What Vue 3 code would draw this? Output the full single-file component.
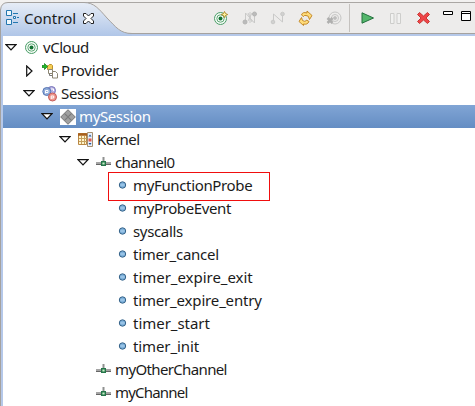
<script setup>
const rows = [
  { t: 'vCloud', level: 0, arrow: 'open', icon: 'target', ls: -0.45 },
  { t: 'Provider', level: 1, arrow: 'closed', icon: 'provider', ls: -0.15 },
  { t: 'Sessions', level: 1, arrow: 'open', icon: 'sessions', ls: -0.35 },
  { t: 'mySession', level: 2, arrow: 'open', icon: 'session', selected: true, ls: -0.38 },
  { t: 'Kernel', level: 3, arrow: 'open', icon: 'kernel', ls: -0.5 },
  { t: 'channel0', level: 4, arrow: 'open', icon: 'channel', ls: -0.6 },
  { t: 'myFunctionProbe', level: 5, icon: 'event', marked: true, ls: -0.35 },
  { t: 'myProbeEvent', level: 5, icon: 'event', ls: -0.38 },
  { t: 'syscalls', level: 5, icon: 'event', ls: -0.35 },
  { t: 'timer_cancel', level: 5, icon: 'event', ls: -0.27 },
  { t: 'timer_expire_exit', level: 5, icon: 'event', ls: -0.03 },
  { t: 'timer_expire_entry', level: 5, icon: 'event', ls: -0.17 },
  { t: 'timer_start', level: 5, icon: 'event', ls: -0.03 },
  { t: 'timer_init', level: 5, icon: 'event', ls: -0.1 },
  { t: 'myOtherChannel', level: 4, icon: 'channel', ls: -0.64 },
  { t: 'myChannel', level: 4, icon: 'channel', ls: -0.8 },
]
</script>

<template>
  <div class="view">
    <header class="bar">
      <svg class="tabshape" width="150" height="36" viewBox="0 0 150 36">
        <defs>
          <linearGradient id="tabfill" x1="0" y1="0" x2="0" y2="1">
            <stop offset="0" stop-color="#e7edf6" />
            <stop offset="1" stop-color="#b0c6e8" />
          </linearGradient>
        </defs>
        <path d="M0 0H9V3H5L1 8V12H0z" fill="#f2f1f0" />
        <path d="M.5 36V10Q1 2.500 8 2.500H84C94 2.500 99 9 107 18C116 27 120 33.500 132 33.500V36Z" fill="url(#tabfill)" />
        <path d="M.5 36V10Q1 2.500 8 2.500H84C94 2.500 99 9 107 18C116 27 120 33.500 132 33.500" fill="none" stroke="#a5a29f" />
      </svg>
      <div class="tab">
        <svg width="14" height="16" viewBox="0 0 14 16" fill="#eff8fc" stroke="#2377b0">
          <path d="M.5.5h5v5h-5zM.5 9.500h5v5h-5z" /><path d="M7 3.500h5M11 7.500h2M7 12.500h5M7.500 6.500h2v2h-2z" />
        </svg>
        <span class="title">Control</span>
        <svg class="close" width="11" height="11" viewBox="0 0 11 11"><path d="M.5.5h2.500L5.500 3 8 .5h2.500V3L8 5.500 10.500 8v2.500H8L5.500 8 3 10.500H.5V8L3 5.500.5 3z" fill="#fff" stroke="#222" /></svg>
      </div>
      <div class="tools">
        <svg class="t1" width="16" height="16" viewBox="0 0 16 16" fill="none"><circle cx="6.500" cy="8.500" r="6" fill="#f4fbf5" stroke="#4a9d68" /><circle cx="6.500" cy="8.500" r="3.700" stroke="#60a978" /><circle cx="6.500" cy="8.500" r="2" fill="#137333" /><path d="M10.500 1.500l1 2 2.200 1-2.200 1-1 2.200-1-2.200-2.200-1 2.200-1z" fill="#fff2a0" stroke="#ac8424" stroke-width=".9" /></svg>
        <svg class="t2" width="16" height="16" viewBox="0 0 16 16" fill="none" stroke="#c9c9c8"><path d="M3.500 11V3l9 10V5M6 3l4 9M6 11l4-8M8 2v11" /><circle cx="3" cy="12" r="2" fill="#bbb" stroke="#b5b5b4" /><circle cx="12.500" cy="4" r="2" fill="#bbb" stroke="#b5b5b4" /></svg>
        <svg class="t3" width="16" height="16" viewBox="0 0 16 16" fill="none" stroke="#c9c9c8"><path d="M3.500 11V4l9 8V5" /><circle cx="3" cy="12" r="1.800" fill="#d1d1d0" /><circle cx="12.500" cy="4" r="1.800" fill="#d1d1d0" /></svg>
        <svg class="t4" width="16" height="16" viewBox="0 0 16 16" fill="#ffdc7a" stroke="#bd801e" stroke-width=".9"><path d="M5.500 6.500L3.500 5Q4.500 1.500 9 3V1L14 5.500 11.500 9.500 10.200 6.200 8 5.500Q6 5 5.500 6.500z" /><path d="M8.500 10l2.500 1.500Q9.500 15 5.500 14V15.500L1 11.500 3.500 7.500 4.500 10.500 6.500 11.300Q8 11.500 8.500 10z" /></svg>
        <svg class="t5" width="16" height="16" viewBox="0 0 16 16" fill="none" stroke="#c6c6c5"><circle cx="9" cy="8" r="6" /><circle cx="9" cy="8" r="3.500" /><circle cx="9" cy="8" r="1.500" fill="#bbb" /><path d="M1.500 8l5 5M6.500 8l-5 5" stroke="#afafae" stroke-width="2.500" /></svg>
        <i class="sep"></i>
        <svg class="t6" width="14" height="12" viewBox="0 0 14 12"><path d="M1 .8L12.500 6 1 11.200z" fill="#54b76c" stroke="#24713f" /></svg>
        <svg class="t7" width="12" height="12" viewBox="0 0 12 12" fill="#f1f1f0" stroke="#cdcdcb"><path d="M.5.5h3.500v10H.5zM7 .5h3.500v10H7z" /></svg>
        <svg class="t8" width="13" height="12" viewBox="0 0 13 12"><path d="M2.500.5L6.500 4l4-3.500 2 2L9 6l3.500 3.500-2 2-4-3.500-4 3.500-2-2L4 6 .5 2.500z" fill="#ef4548" stroke="#c53a36" /></svg>
        <svg class="t9" width="10" height="4" viewBox="0 0 10 4"><path d="M.5.5h9v3h-9z" fill="#fff" stroke="#000" /></svg>
        <svg class="t10" width="10" height="10" viewBox="0 0 10 10"><path d="M.5.5h9v9h-9zM0 2.500h10" fill="#fff" stroke="#000" /></svg>
      </div>
    </header>
    <main class="tree">
      <div v-for="r in rows" :key="r.t" class="row" :class="['l' + r.level, { selected: r.selected }]">
        <span class="arrow">
          <svg v-if="r.arrow === 'open'" width="12" height="7" viewBox="0 0 12 7"><path d="M1 .7h10L6 6z" fill="#fff" stroke="#111" stroke-width="1.200" /></svg>
          <svg v-if="r.arrow === 'closed'" width="12" height="12" viewBox="0 0 12 12"><path d="M3.700 1v10L9 6z" fill="#fff" stroke="#111" stroke-width="1.200" /></svg>
        </span>
        <svg class="icon" width="16" height="16" viewBox="0 0 16 16" fill="none">
          <g v-if="r.icon === 'target'"><circle cx="7.500" cy="7.500" r="6" fill="#f4fbf5" stroke="#4a9d68" /><circle cx="7.500" cy="7.500" r="3.700" stroke="#60a978" /><circle cx="7.500" cy="7.500" r="2" fill="#137333" /></g>
          <g v-else-if="r.icon === 'provider'"><path d="M5.500 2.500h1l1-1h2l1 1v4h-5z" fill="#f5cd54" stroke="#bd922e" /><path d="M7.500 7v5.500h3M7.500 9.500h3" stroke="#777" /><path d="M6.500 6.500h4v4h-4zM10.500 8.500h3l2 2v4.500h-5z" fill="#fff" stroke="#8c8674" /><path d="M0 2.500h2.500V.5L5.500 3.500 2.500 6.500V4.500H0z" fill="#20b828" stroke="#087b16" stroke-width=".7" /></g>
          <g v-else-if="r.icon === 'sessions'"><circle cx="9.500" cy="4.500" r="4" fill="#b5b0e2" stroke="#7773b8" /><circle cx="4.800" cy="5.500" r="4" fill="#91abd9" stroke="#5878b5" /><circle cx="10.500" cy="11" r="4" fill="#ee958b" stroke="#c65e5b" /><path d="M3.500 7.500v-3h2.500v2H3.500M9.200 13v-3h2.500v2H9.200M9 3h2.500v2" stroke="#fff" /></g>
          <g v-else-if="r.icon === 'session'"><path d="M0 0h16v16H0z" fill="#fff" /><path d="M8 .7L11.500 4.200 8 7.700 4.500 4.200zM8 8.300l3.500 3.500L8 15.300l-3.500-3.500zM4.200 4.500L7.700 8l-3.500 3.500L.7 8zM11.800 4.500L15.300 8l-3.500 3.500L8.300 8z" fill="#a0a0a0" stroke="#747474" /></g>
          <g v-else-if="r.icon === 'kernel'"><path d="M.5 1.500h8v11h-8z" fill="#fff4cc" stroke="#b98744" /><path d="M0 2.500h9" stroke="#a95f1b" stroke-width="2.500" /><path d="M3.500 4v8M6.500 4v8M1 6.500h8M1 9.500h8" stroke="#c6a05c" /><path d="M9.500.5h5v14h-5z" fill="#e7effa" stroke="#a58f70" /><path d="M10.500 4.500L12 2.500l1.500 2zM10.500 11h3L12 13z" fill="#245596" /><path d="M10.500 6.500h3v3h-3z" fill="#e0564b" /></g>
          <g v-else-if="r.icon === 'channel'"><path d="M7.500 2v6" stroke="#8f9190" stroke-width="2" /><path d="M0 8.500h15" stroke="#a5a5a5" stroke-width="3" /><path d="M0 9.500h15" stroke="#666" /><path d="M5.700 6.700h3.600v3.600H5.700z" fill="#c8f0c7" stroke="#25764a" stroke-width="1.400" /></g>
          <g v-else><circle cx="8.500" cy="7" r="3.200" fill="#7fb2dc" stroke="#356288" /><path d="M6.500 7h4" stroke="#b4d4ee" /></g>
        </svg>
        <span class="label" :style="{ letterSpacing: r.ls + 'px' }">{{ r.t }}</span>
        <i v-if="r.marked" class="mark"></i>
      </div>
    </main>
  </div>
</template>

<style>
body { margin: 0; overflow: hidden; background: #fff; }
</style>
<style scoped>
.view { box-sizing: border-box; width: 475px; height: 406px; font: 15px "Noto Sans", sans-serif; color: #1b1b1b; overflow: hidden; }
svg { display: block; flex: none; }
.bar { position: relative; box-sizing: border-box; height: 36px; display: flex; background: linear-gradient(#f2f1f0 0 2px, #aaa7a4 2px 3px, #edeceb 3px 33px, #a5a29f 33px 34px, #b5c8e9 34px); }
.tabshape { position: absolute; left: 0; top: 0; }
.tab { position: relative; width: 214px; display: flex; align-items: flex-start; padding: 10px 0 0 6px; box-sizing: border-box; }
.title { margin-left: 4px; line-height: 20px; margin-top: -2px; width: 59px; white-space: nowrap; }
.close { margin-top: 3px; }
.tools { display: flex; align-items: flex-start; }
.t1 { margin-top: 10px; }
.t2, .t3, .t4, .t5 { margin: 10px 0 0 12px; }
.t3 { margin-left: 12px; }
.sep { width: 1px; height: 28px; margin: 4px 0 0 7px; background: #c5c2bf; }
.t6 { margin: 12px 0 0 11px; }
.t7 { margin: 13px 0 0 15px; }
.t8 { margin: 12px 0 0 15px; }
.t9 { margin: 11px 0 0 13px; }
.t10 { margin: 11px 0 0 8px; }
.tree { height: 370px; box-sizing: border-box; padding-left: 3px; background: linear-gradient(90deg, #a5a29f 0 1px, #b5c8e9 1px 3px, #fff 3px); }
.row { position: relative; height: 23px; display: flex; align-items: center; box-sizing: border-box; padding-left: 2px; }
.l1 { padding-left: 20px; }
.l2 { padding-left: 38px; }
.l3 { padding-left: 56px; }
.l4 { padding-left: 74px; }
.l5 { padding-left: 92px; }
.selected { color: #fff; background: linear-gradient(#81a5d5, #648dc3); }
.arrow { width: 12px; display: flex; }
.icon { margin-left: 7px; }
.label { margin-left: 3px; line-height: 23px; white-space: pre; }
.mark { position: absolute; left: 105px; top: -2px; width: 160px; height: 27px; border: 1px solid #f00e0e; z-index: 1; }
</style>
